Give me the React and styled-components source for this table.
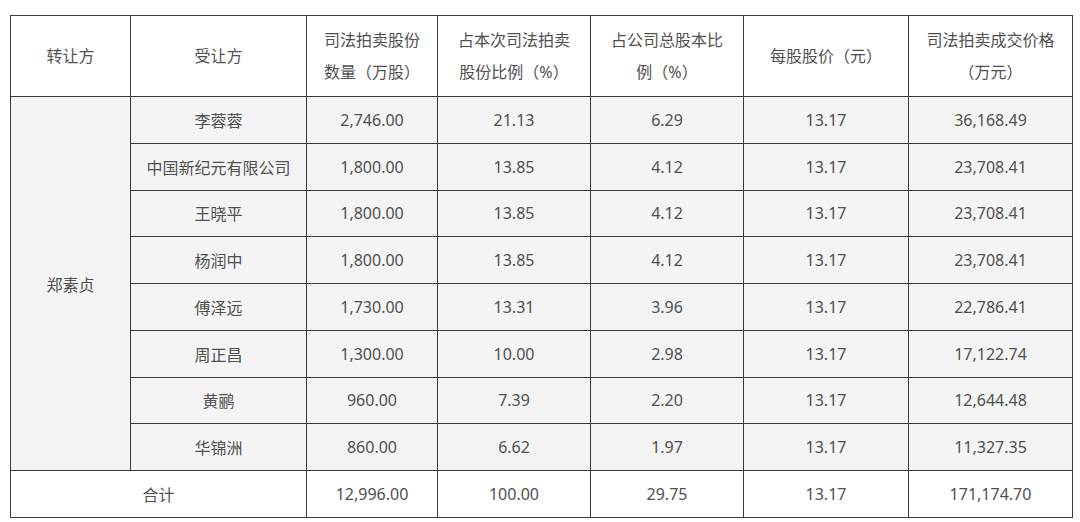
import React from 'react';
import styled, { createGlobalStyle } from 'styled-components';

const GlobalStyle = createGlobalStyle`
  body {
    margin: 0;
    background: #fff;
    font-family: "Noto Sans", "Noto Sans CJK SC", sans-serif;
  }
`;

const Page = styled.div`
  padding: 15px 0 0 10px;
`;

const Table = styled.table`
  border-collapse: collapse;
  table-layout: fixed;
  width: 1062px;
  color: #505050;
  font-size: 16px;
  border: 1px solid #777;
`;

const HeadCell = styled.th`
  font-weight: normal;
  height: 80px;
  padding: 0 6px;
  line-height: 32px;
  background: #fff;
  border: 1px solid #3a3a3a;
  text-align: center;
`;

const Cell = styled.td`
  height: 45.75px;
  padding: 0 6px;
  text-align: center;
  border: 1px solid #3a3a3a;
  background: ${p => (p.$total ? '#fff' : '#f4f4f4')};
`;

const widths = [120, 176, 131, 153, 153, 165, 164];

const heads = [
  '转让方',
  '受让方',
  '司法拍卖股份\n数量（万股）',
  '占本次司法拍卖\n股份比例（%）',
  '占公司总股本比\n例（%）',
  '每股股价（元）',
  '司法拍卖成交价格\n（万元）',
];

const rows = [
  ['李蓉蓉', '2,746.00', '21.13', '6.29', '13.17', '36,168.49'],
  ['中国新纪元有限公司', '1,800.00', '13.85', '4.12', '13.17', '23,708.41'],
  ['王晓平', '1,800.00', '13.85', '4.12', '13.17', '23,708.41'],
  ['杨润中', '1,800.00', '13.85', '4.12', '13.17', '23,708.41'],
  ['傅泽远', '1,730.00', '13.31', '3.96', '13.17', '22,786.41'],
  ['周正昌', '1,300.00', '10.00', '2.98', '13.17', '17,122.74'],
  ['黄鹂', '960.00', '7.39', '2.20', '13.17', '12,644.48'],
  ['华锦洲', '860.00', '6.62', '1.97', '13.17', '11,327.35'],
];

const total = ['12,996.00', '100.00', '29.75', '13.17', '171,174.70'];

export default function App() {
  return (
    <Page>
      <GlobalStyle />
      <Table>
        <colgroup>
          {widths.map((w, i) => <col key={i} style={{ width: w }} />)}
        </colgroup>
        <thead>
          <tr>
            {heads.map((h, i) => (
              <HeadCell key={i}>
                {h.split('\n').map((line, j) => <div key={j}>{line}</div>)}
              </HeadCell>
            ))}
          </tr>
        </thead>
        <tbody>
          {rows.map((r, i) => (
            <tr key={i}>
              {i === 0 && <Cell rowSpan={rows.length}>郑素贞</Cell>}
              {r.map((v, j) => <Cell key={j}>{v}</Cell>)}
            </tr>
          ))}
          <tr>
            <Cell $total colSpan={2}>合计</Cell>
            {total.map((v, j) => <Cell $total key={j}>{v}</Cell>)}
          </tr>
        </tbody>
      </Table>
    </Page>
  );
}
